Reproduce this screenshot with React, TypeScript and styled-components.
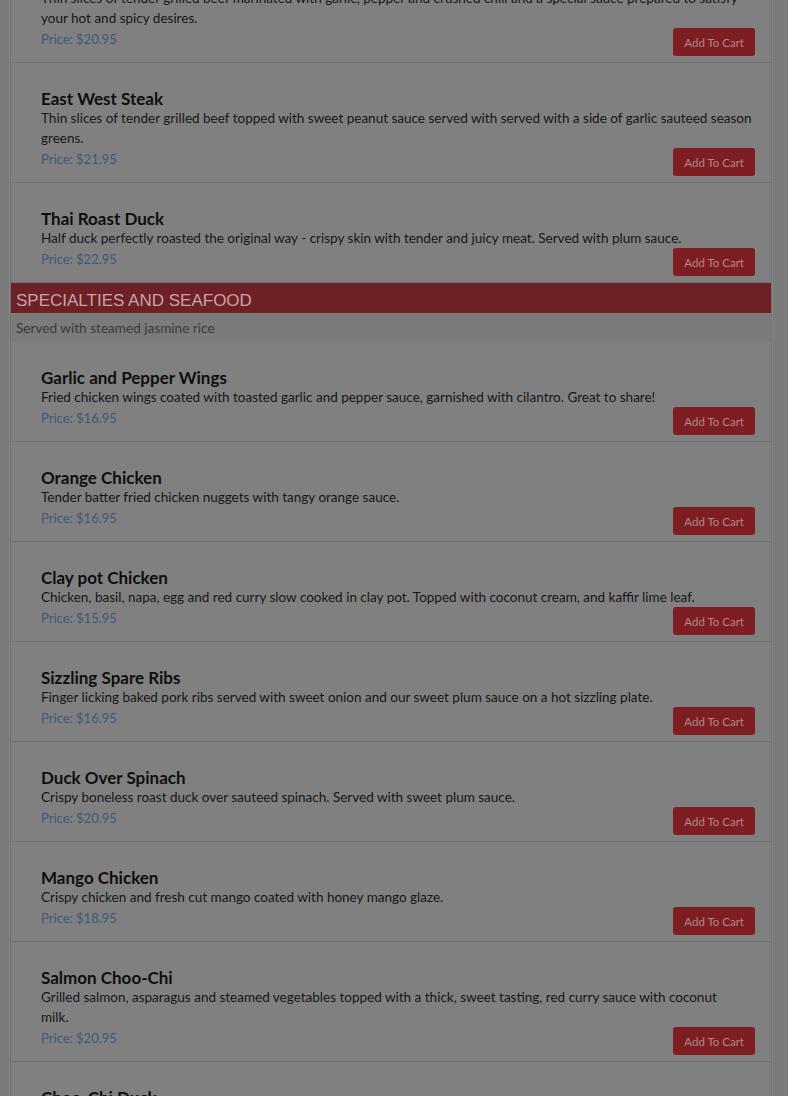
import React from 'react'
import styled, { createGlobalStyle } from 'styled-components'

const GlobalStyle = createGlobalStyle`
  html, body {
    margin: 0;
    padding: 0;
    background: #7b7b7b;
    overflow: hidden;
  }
`

interface Dish {
  name: string
  description: string
  price: string
}

const Page = styled.div`
  padding: 0 16px 0 10px;
  margin-top: -58px;
  font-family: Lato, 'Liberation Sans', sans-serif;
`

const Card = styled.div`
  background: #808080;
  border-left: 1px solid #727272;
  border-right: 1px solid #727272;
  box-shadow: 1px 0 0 #868686, -1px 0 0 #868686;
`

const Item = styled.div<{ $first?: boolean }>`
  border-top: ${({ $first }) => ($first ? 'none' : '1px solid #717171')};
  padding: 25px 16px 5px 30px;
`

const Name = styled.h3`
  margin: 0;
  font-size: 17px;
  line-height: 20px;
  font-weight: 700;
  color: #0e0e0e;
  position: relative;
  top: 1px;
`

const Description = styled.p`
  margin: 0;
  font-size: 13.5px;
  line-height: 20px;
  color: #161616;
  white-space: pre-line;
`

const PriceRow = styled.div`
  display: flex;
  justify-content: space-between;
  align-items: flex-start;
`

const Price = styled.span`
  padding-top: 2px;
  font-size: 13px;
  line-height: 18px;
  color: #3d5977;
`

const CartButton = styled.button`
  height: 28px;
  margin-bottom: 1px;
  padding: 0 11px;
  border: none;
  border-radius: 3px;
  background: #7e1e23;
  color: #b3878a;
  font-family: Lato, 'Liberation Sans', sans-serif;
  font-size: 11.5px;
  cursor: pointer;
`

const SectionHeader = styled.div`
  border-top: 1px solid #717171;
  background: #6e2027;
  height: 31px;
  padding: 5px 0 0 5px;
  box-sizing: border-box;
  display: flex;
  align-items: center;
  font-family: 'Liberation Sans', Arial, sans-serif;
  font-size: 17px;
  color: #c7a3a5;
`

const SectionNote = styled.div`
  background: #7b7b7b;
  height: 29px;
  padding-left: 5px;
  display: flex;
  align-items: center;
  font-size: 13.6px;
  color: #3a3a3a;
`

const beef: Dish[] = [
  {
    name: 'Spicy Beef',
    description:
      'Thin slices of tender grilled beef marinated with garlic, pepper and crushed chili and a special sauce prepared to satisfy your hot and spicy desires.',
    price: '$20.95',
  },
  {
    name: 'East West Steak',
    description:
      'Thin slices of tender grilled beef topped with sweet peanut sauce served with served with a side of garlic sauteed season greens.',
    price: '$21.95',
  },
  {
    name: 'Thai Roast Duck',
    description:
      'Half duck perfectly roasted the original way - crispy skin with tender and juicy meat. Served with plum sauce.',
    price: '$22.95',
  },
]

const specialties: Dish[] = [
  {
    name: 'Garlic and Pepper Wings',
    description:
      'Fried chicken wings coated with toasted garlic and pepper sauce, garnished with cilantro. Great to share!',
    price: '$16.95',
  },
  {
    name: 'Orange Chicken',
    description: 'Tender batter fried chicken nuggets with tangy orange sauce.',
    price: '$16.95',
  },
  {
    name: 'Clay pot Chicken',
    description:
      'Chicken, basil, napa, egg and red curry slow cooked in clay pot. Topped with coconut cream, and kaffir lime leaf.',
    price: '$15.95',
  },
  {
    name: 'Sizzling Spare Ribs',
    description:
      'Finger licking baked pork ribs served with sweet onion and our sweet plum sauce on a hot sizzling plate.',
    price: '$16.95',
  },
  {
    name: 'Duck Over Spinach',
    description: 'Crispy boneless roast duck over sauteed spinach. Served with sweet plum sauce.',
    price: '$20.95',
  },
  {
    name: 'Mango Chicken',
    description: 'Crispy chicken and fresh cut mango coated with honey mango glaze.',
    price: '$18.95',
  },
  {
    name: 'Salmon Choo-Chi',
    description:
      'Grilled salmon, asparagus and steamed vegetables topped with a thick, sweet tasting, red curry sauce with coconut\nmilk.',
    price: '$20.95',
  },
  {
    name: 'Choo-Chi Duck',
    description: 'Crispy duck topped with choo-chi red curry sauce and coconut milk.',
    price: '$21.95',
  },
]

const MenuItem: React.FC<{ dish: Dish; first?: boolean }> = ({ dish, first }): JSX.Element => (
  <Item $first={first}>
    <Name>{dish.name}</Name>
    <Description>{dish.description}</Description>
    <PriceRow>
      <Price>Price: {dish.price}</Price>
      <CartButton>Add To Cart</CartButton>
    </PriceRow>
  </Item>
)

const App: React.FC = (): JSX.Element => (
  <>
    <GlobalStyle />
    <Page>
      <Card>
        {beef.map((d, i) => (
          <MenuItem key={i} dish={d} />
        ))}
        <SectionHeader>SPECIALTIES AND SEAFOOD</SectionHeader>
        <SectionNote>Served with steamed jasmine rice</SectionNote>
        {specialties.map((d, i) => (
          <MenuItem key={i} dish={d} first={i === 0} />
        ))}
      </Card>
    </Page>
  </>
)

export default App
